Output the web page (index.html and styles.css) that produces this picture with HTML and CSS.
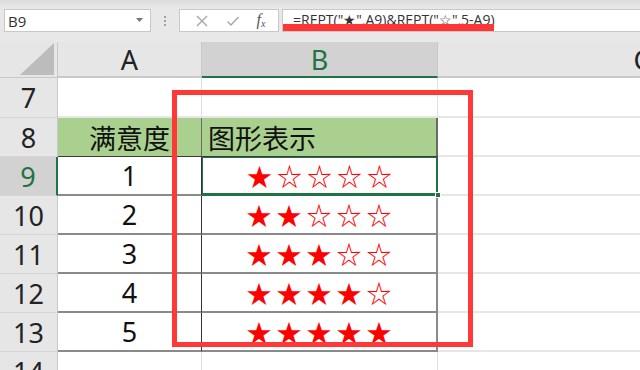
FILE: index.html
```html
<!DOCTYPE html>
<html>
<head>
<meta charset="utf-8">
<link rel="stylesheet" href="styles.css">
</head>
<body>
<div class="app">
  <div class="toolbar">
    <div class="namebox"><span class="ref">B9</span><svg class="dd" width="8" height="5" viewBox="0 0 8 5"><path d="M0 0h7L3.5 4z" fill="#777"/></svg></div>
    <div class="dots"><i></i><i></i><i></i></div>
    <div class="fxbox">
      <svg width="14" height="14" viewBox="0 0 14 14"><path d="M2 2L12 12M12 2L2 12" stroke="#a6a6a6" stroke-width="1.4" fill="none"/></svg>
      <svg width="14" height="14" viewBox="0 0 14 14"><path d="M1.5 7.5L5 11L12.5 3" stroke="#a6a6a6" stroke-width="1.4" fill="none"/></svg>
      <span class="fx">f<sub>x</sub></span>
    </div>
    <div class="formula"><span class="ftext">=REPT("★",A9)&amp;REPT("☆",5-A9)</span><span class="redbar"></span></div>
  </div>
  <div class="sheet">
    <div class="grid">
      <div class="corner"><svg width="34" height="32" viewBox="0 0 34 32"><path d="M34 0V32H0z" fill="#bcbcbc"/></svg></div>
      <div class="colh">A</div>
      <div class="colh sel">B</div>
      <div class="colh last">C</div>

      <div class="rowh">7</div><div class="c"></div><div class="c"></div><div class="c last"></div>
      <div class="rowh">8</div><div class="c hd ca">满意度</div><div class="c hd cb">图形表示</div><div class="c last"></div>
      <div class="rowh sel">9</div><div class="c t ca">1</div><div class="c t cb active">★☆☆☆☆<span class="handle"></span></div><div class="c last"></div>
      <div class="rowh">10</div><div class="c t ca">2</div><div class="c t cb">★★☆☆☆</div><div class="c last"></div>
      <div class="rowh">11</div><div class="c t ca">3</div><div class="c t cb">★★★☆☆</div><div class="c last"></div>
      <div class="rowh">12</div><div class="c t ca">4</div><div class="c t cb">★★★★☆</div><div class="c last"></div>
      <div class="rowh">13</div><div class="c t ca">5</div><div class="c t cb">★★★★★</div><div class="c last"></div>
      <div class="rowh r14">14</div><div class="c"></div><div class="c"></div><div class="c last"></div>
    </div>
    <div class="redbox"></div>
  </div>
</div>
</body>
</html>
```
FILE: styles.css
```css
* { box-sizing: border-box; }
html, body { margin: 0; padding: 0; }
body { width: 640px; height: 370px; overflow: hidden; background: #fff; font-family: "Noto Sans CJK SC", "Noto Sans", sans-serif; }
.app { width: 640px; height: 370px; overflow: hidden; }
.toolbar { height: 42px; background: linear-gradient(#dcdcdc, #e8e8e8 8px, #e8e8e8); display: flex; align-items: flex-start; padding-top: 9px; }
.namebox { margin-left: 4px; width: 147px; height: 23px; background: #fff; border: 1px solid #c8c8c8; display: flex; align-items: center; justify-content: space-between; padding: 0 6px 0 3px; }
.ref { font-family: "Open Sans", "Noto Sans", sans-serif; font-size: 15px; color: #333; }
.dots { width: 28px; height: 23px; display: flex; flex-direction: column; align-items: center; justify-content: center; gap: 2px; }
.dots i { display: block; width: 2px; height: 2px; background: #a0a0a0; }
.fxbox { width: 100px; height: 23px; background: #fff; border: 1px solid #c8c8c8; display: flex; align-items: center; justify-content: space-around; padding: 0 4px 0 6px; }
.fx { font-family: "Liberation Serif", serif; font-style: italic; font-size: 16px; color: #555; line-height: 1; }
.fx sub { font-size: 10px; vertical-align: -2px; }
.formula { margin-left: 3px; flex: 1; height: 23px; background: #fff; border: 1px solid #c8c8c8; border-right: none; position: relative; padding-left: 10px; overflow: hidden; }
.ftext { font-family: "Open Sans", "Noto Sans", sans-serif; font-size: 14px; color: #333; line-height: 18px; position: relative; top: -4px; }
.redbar { position: absolute; left: 0; top: 14px; width: 211px; height: 8px; background: #ff3636; }
.sheet { position: relative; }
.grid { display: grid; grid-template-columns: 58px 144px 236px 408px; grid-template-rows: 36px 40px 39px 39px 39px 39px 39px 39px 20px; overflow: hidden; width: 640px; }
.corner { background: #e6e6e6; border-right: 1px solid #c8c8c8; border-bottom: 1px solid #c8c8c8; display: flex; align-items: flex-end; justify-content: flex-end; padding: 0 3px 2px 0; }
.colh { background: #e6e6e6; border-right: 1px solid #c8c8c8; border-bottom: 2px solid #c8c8c8; font-size: 27px; color: #222; display: flex; align-items: center; justify-content: center; line-height: 1; font-family: "Noto Sans", sans-serif; }
.colh.sel { background: #d2d2d2; color: #217346; border-bottom: 2px solid #217346; }
.colh.last { border-right: none; }
.rowh { background: #e6e6e6; border-right: 1px solid #c8c8c8; border-bottom: 1px solid #d4d4d4; font-size: 27px; color: #222; display: flex; align-items: center; justify-content: center; font-family: "Noto Sans", sans-serif; line-height: 1; overflow: hidden; }
.rowh.r14 { align-items: flex-start; padding-top: 6px; border-bottom: none; }
.rowh.sel { background: #d2d2d2; color: #217346; border-right: 2px solid #217346; }
.c { border-right: 1px solid #e1e1e1; border-bottom: 2px solid #e6e6e6; }
.c.last { border-right: none; }
.hd { background: #a9d08e; font-size: 27px; color: #111; display: flex; align-items: center; line-height: 1; border-bottom: 1px solid #3a3a3a; }
.hd.ca { justify-content: center; border-right: 1px solid #6a6a6a; }
.hd.cb { justify-content: flex-start; padding-left: 6px; border-right: 2px solid #6a6a6a; }
.t { display: flex; align-items: center; justify-content: center; border-bottom: 2px solid #8a8a8a; line-height: 1; }
.t.ca { font-size: 27px; color: #111; font-family: "Noto Sans", sans-serif; border-right: 1px solid #333; }
.t.cb { font-size: 25px; color: #ff0000; letter-spacing: 5px; padding-left: 5px; border-right: 2px solid #8a8a8a; }
.active { position: relative; box-shadow: inset 0 0 0 1px #217346; border-right: 1px solid #217346 !important; border-bottom: 2px solid #217346 !important; }
.handle { position: absolute; right: -4px; bottom: -4px; width: 6px; height: 6px; background: #217346; border: 1px solid #fff; }
.redbox { position: absolute; left: 172px; top: 48px; width: 301px; height: 257px; border: 5px solid #ff3838; pointer-events: none; }
```
